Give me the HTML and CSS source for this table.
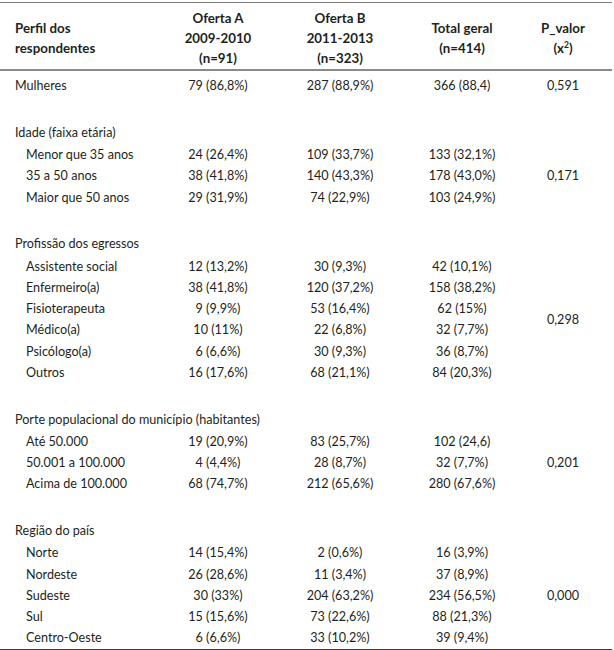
FILE: index.html
```html
<!DOCTYPE html>
<html lang="pt">
<head>
<meta charset="utf-8">
<link rel="stylesheet" href="styles.css">
</head>
<body>
<table class="tbl">
  <colgroup>
    <col class="c-label"><col class="c-a"><col class="c-b"><col class="c-t"><col class="c-p">
  </colgroup>
  <thead>
    <tr>
      <th class="h-label">Perfil dos<br>respondentes</th>
      <th>Oferta A<br>2009-2010<br>(n=91)</th>
      <th>Oferta B<br>2011-2013<br>(n=323)</th>
      <th>Total geral<br>(n=414)</th>
      <th class="h-p">P_valor<br>(x<sup>2</sup>)</th>
    </tr>
  </thead>
  <tbody>
    <tr class="first">
      <td class="lbl">Mulheres</td><td>79 (86,8%)</td><td>287 (88,9%)</td><td>366 (88,4)</td><td class="p">0,591</td>
    </tr>

    <tr class="grp"><td class="lbl" colspan="5">Idade (faixa etária)</td></tr>
    <tr class="sub"><td class="lbl">Menor que 35 anos</td><td>24 (26,4%)</td><td>109 (33,7%)</td><td>133 (32,1%)</td><td class="p" rowspan="3">0,171</td></tr>
    <tr class="sub"><td class="lbl">35 a 50 anos</td><td>38 (41,8%)</td><td>140 (43,3%)</td><td>178 (43,0%)</td></tr>
    <tr class="sub"><td class="lbl">Maior que 50 anos</td><td>29 (31,9%)</td><td>74 (22,9%)</td><td>103 (24,9%)</td></tr>

    <tr class="grp"><td class="lbl" colspan="5">Profissão dos egressos</td></tr>
    <tr class="sub"><td class="lbl">Assistente social</td><td>12 (13,2%)</td><td>30 (9,3%)</td><td>42 (10,1%)</td><td class="p" rowspan="6">0,298</td></tr>
    <tr class="sub"><td class="lbl">Enfermeiro(a)</td><td>38 (41,8%)</td><td>120 (37,2%)</td><td>158 (38,2%)</td></tr>
    <tr class="sub"><td class="lbl">Fisioterapeuta</td><td>9 (9,9%)</td><td>53 (16,4%)</td><td>62 (15%)</td></tr>
    <tr class="sub"><td class="lbl">Médico(a)</td><td>10 (11%)</td><td>22 (6,8%)</td><td>32 (7,7%)</td></tr>
    <tr class="sub"><td class="lbl">Psicólogo(a)</td><td>6 (6,6%)</td><td>30 (9,3%)</td><td>36 (8,7%)</td></tr>
    <tr class="sub"><td class="lbl">Outros</td><td>16 (17,6%)</td><td>68 (21,1%)</td><td>84 (20,3%)</td></tr>

    <tr class="grp"><td class="lbl" colspan="5">Porte populacional do município (habitantes)</td></tr>
    <tr class="sub"><td class="lbl">Até 50.000</td><td>19 (20,9%)</td><td>83 (25,7%)</td><td>102 (24,6)</td><td class="p" rowspan="3">0,201</td></tr>
    <tr class="sub"><td class="lbl">50.001 a 100.000</td><td>4 (4,4%)</td><td>28 (8,7%)</td><td>32 (7,7%)</td></tr>
    <tr class="sub"><td class="lbl">Acima de 100.000</td><td>68 (74,7%)</td><td>212 (65,6%)</td><td>280 (67,6%)</td></tr>

    <tr class="grp"><td class="lbl" colspan="5">Região do país</td></tr>
    <tr class="sub"><td class="lbl">Norte</td><td>14 (15,4%)</td><td>2 (0,6%)</td><td>16 (3,9%)</td><td class="p" rowspan="5">0,000</td></tr>
    <tr class="sub"><td class="lbl">Nordeste</td><td>26 (28,6%)</td><td>11 (3,4%)</td><td>37 (8,9%)</td></tr>
    <tr class="sub"><td class="lbl">Sudeste</td><td>30 (33%)</td><td>204 (63,2%)</td><td>234 (56,5%)</td></tr>
    <tr class="sub"><td class="lbl">Sul</td><td>15 (15,6%)</td><td>73 (22,6%)</td><td>88 (21,3%)</td></tr>
    <tr class="sub last"><td class="lbl">Centro-Oeste</td><td>6 (6,6%)</td><td>33 (10,2%)</td><td>39 (9,4%)</td></tr>
  </tbody>
</table>
</body>
</html>
```
FILE: styles.css
```css
html, body {
  margin: 0;
  padding: 0;
  background: #ffffff;
}

body {
  padding-top: 2px;
  font-family: Lato, "Liberation Sans", sans-serif;
  color: #231f20;
}

.tbl {
  width: 612px;
  border-collapse: collapse;
  table-layout: fixed;
  font-size: 12.6px;
}

.c-label { width: 157px; }
.c-a { width: 122px; }
.c-b { width: 122px; }
.c-t { width: 122px; }
.c-p { width: 89px; }

.tbl thead tr {
  border-top: 1px solid #7a7a7a;
  border-bottom: 2px solid #8a8a8a;
}

.tbl th {
  font-weight: bold;
  font-size: 13.3px;
  line-height: 20px;
  text-align: center;
  vertical-align: middle;
  padding: 5px 0 1px 0;
}

.tbl th.h-label {
  text-align: left;
  padding-left: 15px;
}

.tbl th.h-p {
  padding-right: 9px;
}

.tbl sup {
  font-size: 8.5px;
  line-height: 0;
  vertical-align: 5px;
}

.tbl td {
  padding: 0;
  height: 21.25px;
  line-height: 21.25px;
  text-align: center;
  vertical-align: middle;
  white-space: nowrap;
}

.tbl td.lbl {
  text-align: left;
  padding-left: 15px;
}

.tbl td.p {
  padding-right: 9px;
}

.tbl tr.first td {
  padding-top: 4px;
}

.tbl tr.grp td {
  padding-top: 25.5px;
  padding-bottom: 1px;
}

.tbl tr.sub td.lbl {
  padding-left: 26px;
}

.tbl tbody {
  border-bottom: 2px solid #3a3a3a;
}
```
